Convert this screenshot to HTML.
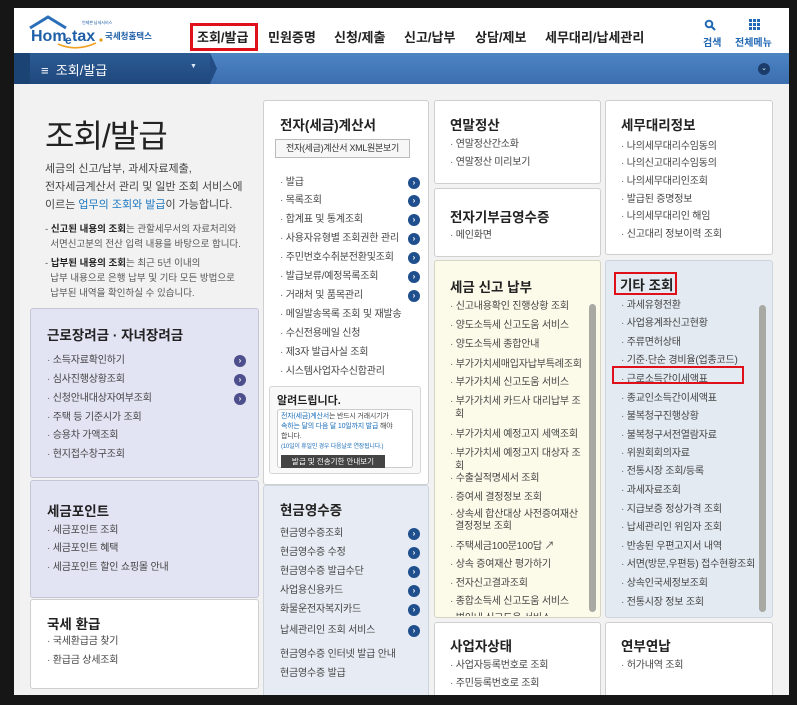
<!DOCTYPE html>
<html><head><meta charset="utf-8">
<style>
*{margin:0;padding:0;box-sizing:border-box}
body{width:797px;height:705px;background:#161616;position:relative;overflow:hidden;font-family:"Liberation Sans","Noto Sans CJK KR","NanumGothic",sans-serif;color:#333}
#page{position:absolute;left:14px;top:8px;width:775px;height:687px;background:#f2f2f2;overflow:hidden}
.a{position:absolute}
.hdr{left:0;top:0;width:775px;height:45px;background:#fff}
.nav{top:19px;font-size:13px;font-weight:bold;color:#222;white-space:nowrap}
.bar{left:0;top:45px;width:775px;height:31px;background:linear-gradient(#4d85c3,#3c6eaf)}
.bar1{left:0;top:45px;width:196px;height:31px;background:linear-gradient(#2c5b94,#1f487d)}
.box{position:absolute;border:1px solid #cfcfcf;border-radius:3px;background:#fff}
.t{position:absolute;font-size:13.5px;font-weight:bold;color:#222;white-space:nowrap}
.l{position:absolute;font-size:10px;line-height:13px;color:#444;white-space:nowrap;letter-spacing:-0.2px}
.l:before{content:"· ";color:#666}
.nb:before{content:""}
.ar{position:absolute;width:12px;height:12px;border-radius:50%;background:#1f4f8c;color:#fff;font-size:8px;line-height:12px;text-align:center;font-weight:bold}
.ap{background:#4d4f8c}
.sb{position:absolute;width:7px;border-radius:4px;background:#a9a9a3}
</style></head><body>
<div id="page">
<div class="a hdr"></div>
<svg class="a" style="left:14px;top:6px" width="140" height="36" viewBox="0 0 140 36">
<path d="M2 14 L20 3 L38 14" fill="none" stroke="#2a6fb8" stroke-width="3"/>
<text x="3" y="27" font-family="Liberation Sans" font-weight="bold" font-size="16" fill="#1f5fa8">Hom</text>
<text x="37" y="30" font-family="Liberation Sans" font-weight="bold" font-size="12" fill="#1f5fa8">e</text>
<text x="44" y="27" font-family="Liberation Sans" font-weight="bold" font-size="16" fill="#1f5fa8">tax</text>
<circle cx="73" cy="26" r="1.6" fill="#e39a1a"/>
<path d="M30 30 Q48 38 68 29" fill="none" stroke="#f0a020" stroke-width="1.6"/>
<text x="77" y="25" font-size="8.5" font-weight="bold" fill="#1f5fa8" font-family="Noto Sans CJK KR,sans-serif">국세청홈택스</text>
<text x="54" y="10" font-size="4" fill="#1f5fa8" font-family="Noto Sans CJK KR,sans-serif">언제쁜 납세서비스</text>
</svg>
<div class="a" style="left:176px;top:15px;width:68px;height:28px;border:3px solid #e0101a"></div>
<div class="a nav" style="left:183px">조회/발급</div>
<div class="a nav" style="left:254px">민원증명</div>
<div class="a nav" style="left:320px">신청/제출</div>
<div class="a nav" style="left:390px">신고/납부</div>
<div class="a nav" style="left:461px">상담/제보</div>
<div class="a nav" style="left:531px">세무대리/납세관리</div>
<svg class="a" style="left:690px;top:11px" width="12" height="12" viewBox="0 0 12 12"><circle cx="5" cy="5" r="3.3" fill="none" stroke="#2268b5" stroke-width="2"/><path d="M7.5 7.5 L11 11" stroke="#2268b5" stroke-width="2.2"/></svg>
<div class="a" style="left:689px;top:26px;font-size:10px;font-weight:bold;color:#2268b5">검색</div>
<svg class="a" style="left:735px;top:11px" width="11" height="11" viewBox="0 0 11 11" fill="#2268b5"><rect x="0" y="0" width="3" height="3"/><rect x="4" y="0" width="3" height="3"/><rect x="8" y="0" width="3" height="3"/><rect x="0" y="4" width="3" height="3"/><rect x="4" y="4" width="3" height="3"/><rect x="8" y="4" width="3" height="3"/><rect x="0" y="8" width="3" height="3"/><rect x="4" y="8" width="3" height="3"/><rect x="8" y="8" width="3" height="3"/></svg>
<div class="a" style="left:721px;top:26px;font-size:10px;font-weight:bold;color:#2268b5">전체메뉴</div>
<div class="a bar"></div>
<div class="a bar1"></div>
<svg class="a" style="left:196px;top:45px" width="8" height="31"><path d="M0 0 L7 15.5 L0 31Z" fill="#224c83"/></svg>
<div class="a" style="left:0;top:45px;width:16px;height:31px;background:#1b4374"></div>
<div class="a" style="left:27px;top:52px;color:#fff;font-size:13px">≡&nbsp; 조회/발급</div>
<div class="a" style="left:176px;top:55px;color:#dfe8f5;font-size:7px">▼</div>
<div class="a" style="left:744px;top:55px;width:12px;height:12px;border-radius:50%;background:#1c3d6b;color:#cfe;font-size:7px;text-align:center;line-height:12px">⌄</div>

<div class="a" style="left:31px;top:103px;font-size:32px;color:#222;letter-spacing:-1px">조회/발급</div>
<div class="a" style="left:31px;top:152px;font-size:11px;line-height:18px;color:#444">세금의 신고/납부, 과세자료제출,<br>전자세금계산서 관리 및 일반 조회 서비스에<br>이르는 <span style="color:#1d78c1">업무의 조회와 발급</span>이 가능합니다.</div>
<div class="a" style="left:31px;top:214px;font-size:9.5px;line-height:15px;color:#555">- <b style="color:#222">신고된 내용의 조회</b>는 관할세무서의 자료처리와<br>&nbsp; 서면신고분의 전산 입력 내용을 바탕으로 합니다.</div>
<div class="a" style="left:31px;top:248px;font-size:9.5px;line-height:15px;color:#555">- <b style="color:#222">납부된 내용의 조회</b>는 최근 5년 이내의<br>&nbsp; 납부 내용으로 은행 납부 및 기타 모든 방법으로<br>&nbsp; 납부된 내역을 확인하실 수 있습니다.</div>

<div class="box" style="left:16px;top:300px;width:229px;height:170px;background:#e2e3f3;border-color:#c4c6d6"></div>
<div class="t" style="left:33px;top:316px">근로장려금 · 자녀장려금</div>
<div class="l" style="left:33px;top:346px">소득자료확인하기</div><div class="ar ap" style="left:220px;top:347px">›</div>
<div class="l" style="left:33px;top:365px">심사진행상황조회</div><div class="ar ap" style="left:220px;top:366px">›</div>
<div class="l" style="left:33px;top:384px">신청안내대상자여부조회</div><div class="ar ap" style="left:220px;top:385px">›</div>
<div class="l" style="left:33px;top:403px">주택 등 기준시가 조회</div>
<div class="l" style="left:33px;top:421px">승용차 가액조회</div>
<div class="l" style="left:33px;top:440px">현지접수창구조회</div>

<div class="box" style="left:16px;top:472px;width:229px;height:118px;background:#e2e3f3;border-color:#c4c6d6"></div>
<div class="t" style="left:33px;top:492px">세금포인트</div>
<div class="l" style="left:33px;top:516px">세금포인트 조회</div>
<div class="l" style="left:33px;top:534px">세금포인트 혜택</div>
<div class="l" style="left:33px;top:553px">세금포인트 할인 쇼핑몰 안내</div>

<div class="box" style="left:16px;top:591px;width:229px;height:90px"></div>
<div class="t" style="left:33px;top:605px">국세 환급</div>
<div class="l" style="left:33px;top:627px">국세환급금 찾기</div>
<div class="l" style="left:33px;top:646px">환급금 상세조회</div>

<div class="box" style="left:249px;top:92px;width:166px;height:385px"></div>
<div class="t" style="left:266px;top:106px">전자(세금)계산서</div>
<div class="a" style="left:261px;top:131px;width:135px;height:19px;border:1px solid #bbb;background:#f7f7f7;font-size:9px;text-align:center;line-height:17px;color:#333;white-space:nowrap;letter-spacing:-0.3px">전자(세금)계산서 XML원본보기</div>
<div class="l" style="left:266px;top:168px">발급</div><div class="ar" style="left:394px;top:169px">›</div>
<div class="l" style="left:266px;top:186px">목록조회</div><div class="ar" style="left:394px;top:187px">›</div>
<div class="l" style="left:266px;top:205px">합계표 및 통계조회</div><div class="ar" style="left:394px;top:206px">›</div>
<div class="l" style="left:266px;top:224px">사용자유형별 조회권한 관리</div><div class="ar" style="left:394px;top:225px">›</div>
<div class="l" style="left:266px;top:243px">주민번호수취분전환및조회</div><div class="ar" style="left:394px;top:244px">›</div>
<div class="l" style="left:266px;top:262px">발급보류/예정목록조회</div><div class="ar" style="left:394px;top:263px">›</div>
<div class="l" style="left:266px;top:281px">거래처 및 품목관리</div><div class="ar" style="left:394px;top:282px">›</div>
<div class="l" style="left:266px;top:300px">메일발송목록 조회 및 재발송</div>
<div class="l" style="left:266px;top:319px">수신전용메일 신청</div>
<div class="l" style="left:266px;top:338px">제3자 발급사실 조회</div>
<div class="l" style="left:266px;top:357px">시스템사업자수신합관리</div>
<div class="box" style="left:255px;top:378px;width:152px;height:88px;background:#f8f8f8;border-color:#d6d6d6"></div>
<div class="a" style="left:263px;top:384px;font-size:11px;font-weight:bold;color:#222">알려드립니다.</div>
<div class="a" style="left:263px;top:401px;width:136px;height:59px;border:1px solid #ccc;border-radius:3px;background:#fff"></div>
<div class="a" style="left:267px;top:404px;font-size:7px;line-height:10px;color:#444;white-space:nowrap;letter-spacing:-0.2px"><span style="color:#1d6fba">전자(세금)계산서</span>는 반드시 거래시기가<br><span style="color:#1d6fba">속하는 달의 다음 달 10일까지 발급</span> 해야<br>합니다.<br><span style="color:#1d6fba;font-size:6px">(10일이 휴일인 경우 다음날로 연장됩니다.)</span></div>
<div class="a" style="left:267px;top:447px;width:104px;height:13px;background:#444;color:#fff;font-size:7.5px;line-height:13px;text-align:center;white-space:nowrap">발급 및 전송기한 안내보기</div>

<div class="box" style="left:249px;top:477px;width:166px;height:220px;background:#e7ecf4;border-color:#cdd4de"></div>
<div class="t" style="left:266px;top:491px">현금영수증</div>
<div class="l nb" style="left:266px;top:519px">현금영수증조회</div><div class="ar" style="left:394px;top:520px">›</div>
<div class="l nb" style="left:266px;top:538px">현금영수증 수정</div><div class="ar" style="left:394px;top:539px">›</div>
<div class="l nb" style="left:266px;top:557px">현금영수증 발급수단</div><div class="ar" style="left:394px;top:558px">›</div>
<div class="l nb" style="left:266px;top:576px">사업용신용카드</div><div class="ar" style="left:394px;top:577px">›</div>
<div class="l nb" style="left:266px;top:595px">화물운전자복지카드</div><div class="ar" style="left:394px;top:596px">›</div>
<div class="l nb" style="left:266px;top:616px">납세관리인 조회 서비스</div><div class="ar" style="left:394px;top:617px">›</div>
<div class="l nb" style="left:266px;top:640px">현금영수증 인터넷 발급 안내</div>
<div class="l nb" style="left:266px;top:659px">현금영수증 발급</div>

<div class="box" style="left:420px;top:92px;width:167px;height:84px"></div>
<div class="t" style="left:436px;top:106px">연말정산</div>
<div class="l" style="left:436px;top:130px">연말정산간소화</div>
<div class="l" style="left:436px;top:148px">연말정산 미리보기</div>
<div class="box" style="left:420px;top:180px;width:167px;height:69px"></div>
<div class="t" style="left:436px;top:198px">전자기부금영수증</div>
<div class="l" style="left:436px;top:221px">메인화면</div>

<div class="box" style="left:420px;top:252px;width:167px;height:358px;background:#fcfbea;border-color:#d6d5c4"></div>
<div class="t" style="left:436px;top:268px">세금 신고 납부</div>
<div class="sb" style="left:575px;top:296px;height:308px"></div>
<div class="a" style="left:421px;top:290px;width:152px;height:318px;overflow:hidden">
<div class="l" style="left:15px;top:2px">신고내용확인 진행상황 조회</div>
<div class="l" style="left:15px;top:21px">양도소득세 신고도움 서비스</div>
<div class="l" style="left:15px;top:40px">양도소득세 종합안내</div>
<div class="l" style="left:15px;top:60px">부가가치세매입자납부특례조회</div>
<div class="l" style="left:15px;top:78px">부가가치세 신고도움 서비스</div>
<div class="l" style="left:15px;top:97px">부가가치세 카드사 대리납부 조<br>&nbsp; 회</div>
<div class="l" style="left:15px;top:130px">부가가치세 예정고지 세액조회</div>
<div class="l" style="left:15px;top:149px">부가가치세 예정고지 대상자 조<br>&nbsp; 회</div>
<div class="l" style="left:15px;top:174px">수출실적명세서 조회</div>
<div class="l" style="left:15px;top:193px">증여세 결정정보 조회</div>
<div class="l" style="left:15px;top:211px;line-height:12px">상속세 합산대상 사전증여재산<br>&nbsp; 결정정보 조회</div>
<div class="l" style="left:15px;top:242px">주택세금100문100답 ↗</div>
<div class="l" style="left:15px;top:260px">상속 증여재산 평가하기</div>
<div class="l" style="left:15px;top:279px">전자신고결과조회</div>
<div class="l" style="left:15px;top:297px">종합소득세 신고도움 서비스</div>
<div class="l" style="left:15px;top:314px">변이내 신고도움 서비스</div>
</div>
<div class="box" style="left:420px;top:614px;width:167px;height:90px"></div>
<div class="t" style="left:436px;top:627px">사업자상태</div>
<div class="l" style="left:436px;top:651px">사업자등록번호로 조회</div>
<div class="l" style="left:436px;top:669px">주민등록번호로 조회</div>

<div class="box" style="left:591px;top:92px;width:168px;height:155px"></div>
<div class="t" style="left:607px;top:106px">세무대리정보</div>
<div class="l" style="left:607px;top:132px">나의세무대리수임동의</div>
<div class="l" style="left:607px;top:149px">나의신고대리수임동의</div>
<div class="l" style="left:607px;top:167px">나의세무대리인조회</div>
<div class="l" style="left:607px;top:185px">발급된 증명정보</div>
<div class="l" style="left:607px;top:202px">나의세무대리인 해임</div>
<div class="l" style="left:607px;top:220px">신고대리 정보이력 조회</div>

<div class="box" style="left:591px;top:252px;width:168px;height:358px;background:#e3eaf2;border-color:#cdd4de"></div>
<div class="a" style="left:600px;top:264px;width:63px;height:23px;border:2px solid #e0101a"></div>
<div class="t" style="left:606px;top:266px">기타 조회</div>
<div class="sb" style="left:745px;top:297px;height:307px"></div>
<div class="a" style="left:592px;top:287px;width:152px;height:321px;overflow:hidden">
<div class="l" style="left:15px;top:4px">과세유형전환</div>
<div class="l" style="left:15px;top:22px">사업용계좌신고현황</div>
<div class="l" style="left:15px;top:41px">주류면허상태</div>
<div class="l" style="left:15px;top:59px">기준·단순 경비율(업종코드)</div>
<div class="l" style="left:15px;top:78px">근로소득간이세액표</div>
<div class="l" style="left:15px;top:97px">종교인소득간이세액표</div>
<div class="l" style="left:15px;top:115px">불복청구진행상황</div>
<div class="l" style="left:15px;top:134px">불복청구서전열람자료</div>
<div class="l" style="left:15px;top:152px">위원회회의자료</div>
<div class="l" style="left:15px;top:170px">전통시장 조회/등록</div>
<div class="l" style="left:15px;top:189px">과세자료조회</div>
<div class="l" style="left:15px;top:208px">지급보증 정상가격 조회</div>
<div class="l" style="left:15px;top:226px">납세관리인 위임자 조회</div>
<div class="l" style="left:15px;top:245px">반송된 우편고지서 내역</div>
<div class="l" style="left:15px;top:263px">서면(방문,우편등) 접수현황조회</div>
<div class="l" style="left:15px;top:282px">상속인국세정보조회</div>
<div class="l" style="left:15px;top:301px">전통시장 정보 조회</div>
</div>
<div class="a" style="left:598px;top:358px;width:132px;height:18px;border:2px solid #e0101a"></div>
<div class="box" style="left:591px;top:614px;width:168px;height:90px"></div>
<div class="t" style="left:607px;top:627px">연부연납</div>
<div class="l" style="left:607px;top:651px">허가내역 조회</div>
</div>
</body></html>
